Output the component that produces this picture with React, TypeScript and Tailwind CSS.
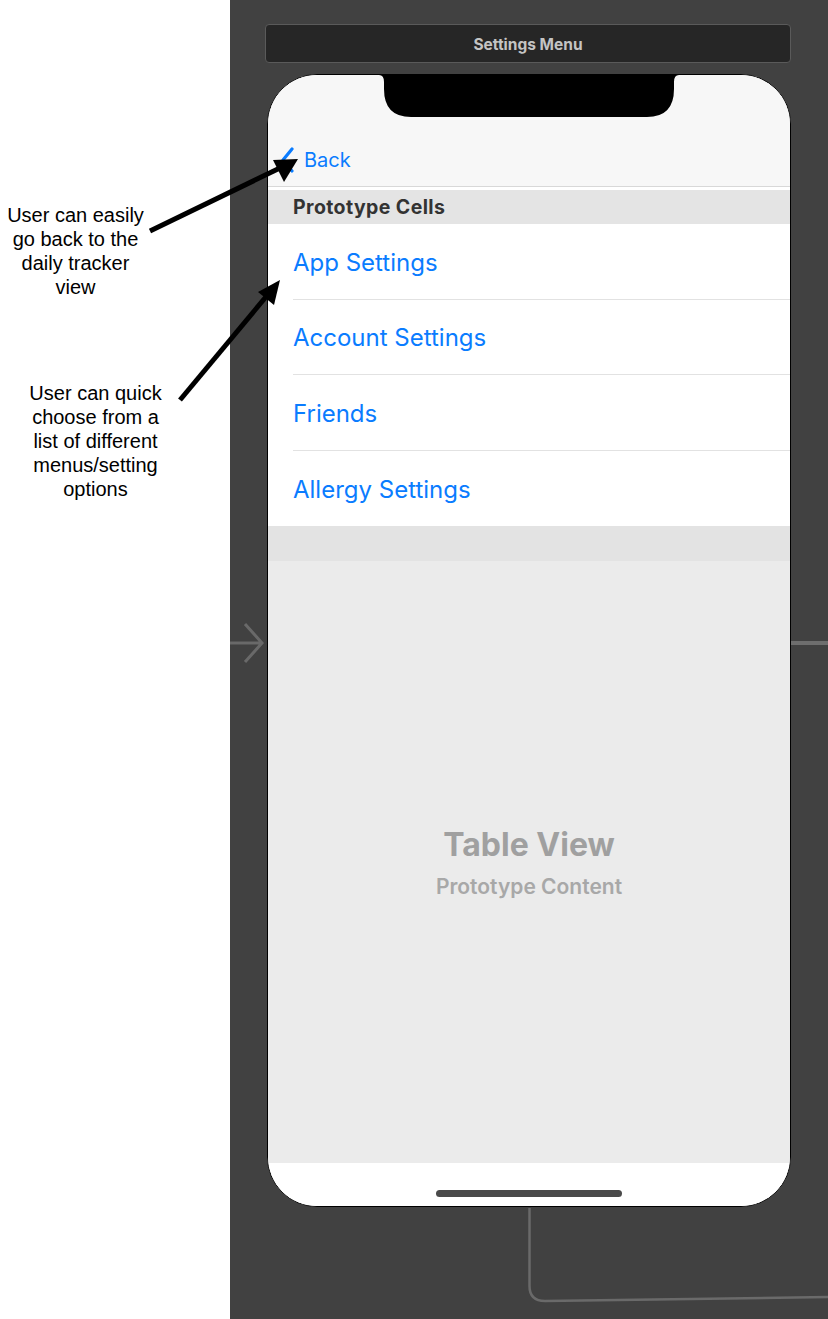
const rows = ['App Settings', 'Account Settings', 'Friends', 'Allergy Settings'];

function Annotations() {
  return (
    <svg className="pointer-events-none absolute left-0 top-0" width="828" height="1319" viewBox="0 0 828 1319">
      {/* callout arrows */}
      <line x1="150" y1="231" x2="282" y2="167" stroke="#000" strokeWidth="5" />
      <polygon points="298,159 273,160 284,182" fill="#000" />
      <line x1="180" y1="400" x2="270" y2="292" stroke="#000" strokeWidth="5" />
      <polygon points="280,280 258,292 274,305" fill="#000" />
      {/* storyboard segues */}
      <path d="M230 643 H262 M245 624 L262 643 L245 662" stroke="#696969" strokeWidth="3" fill="none" />
      <line x1="791" y1="643" x2="828" y2="643" stroke="#6e6e6e" strokeWidth="4" />
      <path d="M529.5 1208 V1286 Q529.5 1301 545 1301 L828 1297" stroke="#6a6a6a" strokeWidth="2.5" fill="none" />
    </svg>
  );
}

function Notch() {
  return (
    <svg className="absolute left-[111px] top-0" width="300" height="42" viewBox="0 0 300 42">
      <path d="M0 0 H300 Q295 0 295 7 V14 Q295 42 268 42 H32 Q5 42 5 14 V7 Q5 0 0 0 Z" fill="#000" />
    </svg>
  );
}

function Chevron() {
  return (
    <svg width="14" height="26" viewBox="0 0 14 26" fill="none" stroke="#0a7cff" strokeWidth="3.2" strokeLinecap="round" strokeLinejoin="round">
      <path d="M11 2 L2 13 L11 24" />
    </svg>
  );
}

export default function App() {
  return (
    <div className="relative flex h-[1319px] w-[828px] overflow-hidden bg-white font-['Inter',sans-serif]">
      <div className="w-[230px] shrink-0 bg-white font-['Liberation_Sans',Arial,sans-serif] text-[20px] leading-[24px] text-black">
        <div className="mt-[203px] w-[151px] text-center">
          User can easily<br />go back to the<br />daily tracker<br />view
        </div>
        <div className="ml-[20px] mt-[82px] w-[151px] text-center">
          User can quick<br />choose from a<br />list of different<br />menus/setting<br />options
        </div>
      </div>

      <div className="flex-1 bg-[#414141] pt-[24px]">
        <div className="ml-[35px] flex h-[39px] w-[526px] items-center justify-center rounded-[4px] border border-[#5a5a5a] bg-[#262626] pt-[3px] text-[15.5px] font-bold text-[#c4c4c4]">
          Settings Menu
        </div>

        <div className="ml-[37px] mt-[11px] flex h-[1133px] w-[524px] flex-col overflow-hidden rounded-[50px] border-[1.5px] border-black bg-white">
          <div className="relative h-[112px] shrink-0 border-b border-[#d8d8d8] bg-[#f7f7f7]">
            <Notch />
            <div className="absolute left-[13px] top-[70px] flex items-center gap-[9px] text-[20px] text-[#0a7cff]">
              <Chevron />
              <span>Back</span>
            </div>
          </div>
          <div className="h-[3px] shrink-0 bg-white" />
          <div className="flex h-[34px] shrink-0 items-center bg-[#e4e4e4] pl-[25px] pt-[1px] text-[19.5px] font-bold tracking-[0.4px] text-[#333]">
            Prototype Cells
          </div>
          <div className="bg-white pl-[25px]">
            {rows.map((r, i) => (
              <div
                key={r}
                className={`flex h-[75.5px] items-center pt-[3px] text-[24px] text-[#0a7cff] ${i < rows.length - 1 ? 'border-b border-[#e2e2e2]' : ''}`}
              >
                {r}
              </div>
            ))}
          </div>
          <div className="h-[35px] shrink-0 bg-[#e3e3e3]" />
          <div className="flex flex-1 flex-col items-center justify-center bg-[#ebebeb] pt-[4px]">
            <div className="text-[32px] font-bold leading-[40px] text-[#a0a0a0]">Table View</div>
            <div className="mt-[6px] text-[21px] font-semibold text-[#a8a8a8]">Prototype Content</div>
          </div>
          <div className="flex h-[43px] shrink-0 items-start justify-center bg-white pt-[27px]">
            <div className="h-[7px] w-[186px] rounded-full bg-[#4a4a4a]" />
          </div>
        </div>
      </div>

      <Annotations />
    </div>
  );
}
